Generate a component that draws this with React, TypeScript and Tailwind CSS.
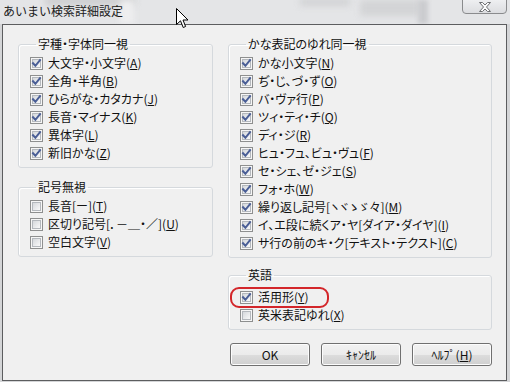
// あいまい検索詳細設定 — Windows 7 style dialog mock
import { ReactNode } from "react";

type Item = { label: string; key: string; checked: boolean };

// ─── Data ──────────────────────────────────────────────────────────────────────
const JISHU: Item[] = [
  { label: "大文字・小文字", key: "A", checked: true },
  { label: "全角・半角", key: "B", checked: true },
  { label: "ひらがな・カタカナ", key: "J", checked: true },
  { label: "長音・マイナス", key: "K", checked: true },
  { label: "異体字", key: "L", checked: true },
  { label: "新旧かな", key: "Z", checked: true },
];

const KIGOU: Item[] = [
  { label: "長音[ー]", key: "T", checked: false },
  { label: "区切り記号[．－＿・／]", key: "U", checked: false },
  { label: "空白文字", key: "V", checked: false },
];

const KANA: Item[] = [
  { label: "かな小文字", key: "N", checked: true },
  { label: "ぢ・じ、づ・ず", key: "O", checked: true },
  { label: "バ・ヴァ行", key: "P", checked: true },
  { label: "ツィ・ティ・チ", key: "Q", checked: true },
  { label: "ディ・ジ", key: "R", checked: true },
  { label: "ヒュ・フュ、ビュ・ヴュ", key: "F", checked: true },
  { label: "セ・シェ、ゼ・ジェ", key: "S", checked: true },
  { label: "フォ・ホ", key: "W", checked: true },
  { label: "繰り返し記号[ヽヾゝゞ々]", key: "M", checked: true },
  { label: "イ、エ段に続くア・ヤ[ダイア・ダイヤ]", key: "I", checked: true },
  { label: "サ行の前のキ・ク[テキスト・テクスト]", key: "C", checked: true },
];

const EIGO: Item[] = [
  { label: "活用形", key: "Y", checked: true },
  { label: "英米表記ゆれ", key: "X", checked: false },
];

// ─── Checkbox ──────────────────────────────────────────────────────────────────
function CheckBox({ checked }: { checked: boolean }) {
  return (
    <svg width="13" height="13" viewBox="0 0 13 13" className="shrink-0">
      <defs>
        <linearGradient id="cbInner" x1="0" y1="0" x2="1" y2="1">
          <stop offset="0" stopColor="#d3d6da" />
          <stop offset="1" stopColor="#fbfbfb" />
        </linearGradient>
      </defs>
      <rect x="0.5" y="0.5" width="12" height="12" fill="#f6f6f6" stroke="#8e8f8f" />
      <rect x="2.5" y="2.5" width="8" height="8" fill="url(#cbInner)" stroke="#b4b8bd" />
      {checked && (
        <path d="M3 6.2 L5.4 8.8 L10 3.2" fill="none" stroke="#4a5e96" strokeWidth="2" strokeLinecap="square" />
      )}
    </svg>
  );
}

function Row({ item }: { item: Item }) {
  return (
    <div className="flex items-center h-[18px] gap-[5px]">
      <CheckBox checked={item.checked} />
      <span className="whitespace-nowrap text-[#111]">
        {item.label}(<span className="underline underline-offset-[1px]">{item.key}</span>)
      </span>
    </div>
  );
}

// ─── Group box ─────────────────────────────────────────────────────────────────
function Group({ title, items, className, wide }: { title: string; items: Item[]; className?: string; wide?: boolean }) {
  return (
    <fieldset
      className={`border border-[#d5d9dd] rounded-[3px] pl-[11px] pb-[5px] shadow-[inset_1px_1px_0_#ffffff] ${className ?? ""}`}
    >
      <legend className="ml-[6px] px-[2px] leading-[14px] text-[#111]">{title}</legend>
      <div className={`flex flex-col ${wide ? "pt-[6px]" : "pt-[3px]"}`}>
        {items.map(it => <Row key={it.key} item={it} />)}
      </div>
    </fieldset>
  );
}

function Button({ children }: { children: ReactNode }) {
  return (
    <div className="w-[80px] h-[23px] rounded-[3px] border border-[#707070] bg-[linear-gradient(#f2f2f2_0%,#ebebeb_50%,#dddddd_51%,#cfcfcf_100%)] shadow-[inset_0_0_0_1px_#fcfcfc] flex items-center justify-center text-[#111] leading-none">
      {children}
    </div>
  );
}

// ─── Main ──────────────────────────────────────────────────────────────────────
export default function App() {
  return (
    <div className="relative w-[510px] h-[382px] overflow-hidden bg-[#d4d5d7] font-['Noto_Sans_CJK_JP',sans-serif] text-[12px]">
      {/* Title bar (blurred glass) */}
      <div className="relative h-[24px] bg-[#e4e5e7] overflow-hidden">
        <div className="absolute left-[45px] top-[-4px] w-[90px] h-[10px] bg-[#cfd0d2] blur-[3px]" />
        <div className="absolute left-[300px] top-[-2px] w-[50px] h-[8px] bg-[#d2d3d5] blur-[3px]" />
        <div className="absolute left-[360px] top-[0px] w-[60px] h-[16px] bg-[#d3d4d6] blur-[3px]" />
        <div className="absolute left-[418px] top-0 w-[10px] h-[24px] bg-[#cbcccf] blur-[2px]" />
        <div className="absolute left-[120px] top-0 w-[14px] h-[24px] bg-[#eeeeef] blur-[3px]" />
        <div className="relative pl-[3px] pt-[3px] leading-[16px] text-[#1a1a1a] whitespace-nowrap">
          あいまい検索詳細設定
        </div>
        {/* Close button */}
        <div className="absolute left-[462px] top-[-1px] w-[45px] h-[15px] rounded-b-[4px] border border-[#8a8b8d] bg-[linear-gradient(#eeeff1,#dcdde0)] flex items-center justify-center">
          <svg width="14" height="10" viewBox="0 0 14 10">
            <path
              d="M1.5 0.5 H4.5 L7 3 L9.5 0.5 H12.5 L8.5 5 L12.5 9.5 H9.5 L7 7 L4.5 9.5 H1.5 L5.5 5 Z"
              fill="#fafafa"
              stroke="#6e7073"
              strokeWidth="1"
              strokeLinejoin="round"
            />
          </svg>
        </div>
      </div>

      {/* Client area */}
      <div className="ml-[2px] w-[505px] h-[357px] border border-[#5c5d5f] bg-[#f0f0f0] flex gap-[15px] pl-[15px] pt-[12px] [font-feature-settings:'palt']">
        <div className="w-[195px] flex flex-col">
          <Group title="字種・字体同一視" items={JISHU} />
          <Group title="記号無視" items={KIGOU} className="mt-[12px]" />
        </div>
        <div className="w-[264px] flex flex-col">
          <Group title="かな表記のゆれ同一視" items={KANA} className="pb-[3px]" />
          <Group title="英語" items={EIGO} className="mt-[10px]" wide />
          <div className="mt-[13px] flex justify-end gap-[11px]">
            <Button>OK</Button>
            <Button>ｷｬﾝｾﾙ</Button>
            <Button>
              ﾍﾙﾌﾟ(<span className="underline underline-offset-[1px]">H</span>)
            </Button>
          </div>
        </div>
      </div>

      {/* Red annotation */}
      <div className="absolute left-[230px] top-[287px] w-[99px] h-[21px] rounded-[9px] border-[2px] border-[#d3262a]" />

      {/* Mouse cursor */}
      <svg className="absolute left-[176px] top-[8px]" width="13" height="21" viewBox="0 0 13 21">
        <path d="M0.5 0.5 L0.5 16.5 L4.5 12.8 L7.2 19.5 L9.6 18.5 L7 12 L12 12 Z" fill="#ffffff" stroke="#000000" strokeWidth="1" strokeLinejoin="miter" />
      </svg>
    </div>
  );
}
